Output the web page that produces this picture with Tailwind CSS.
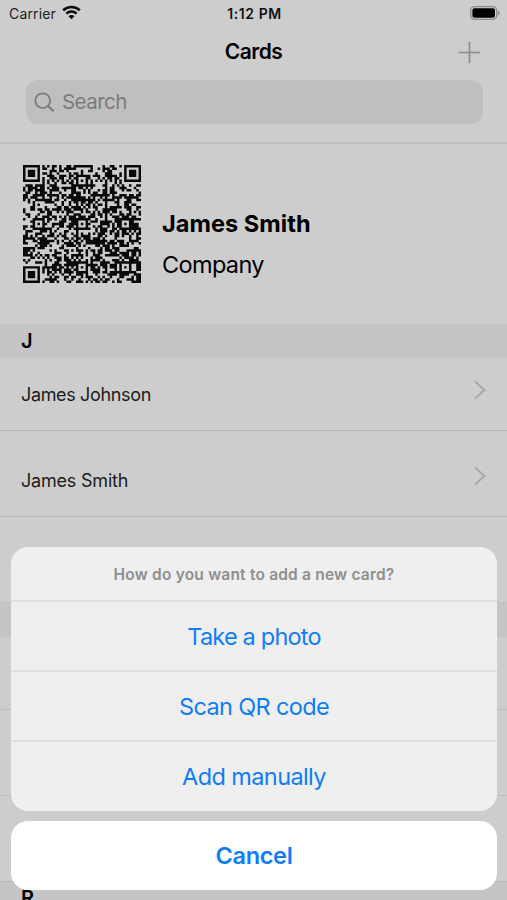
<!DOCTYPE html>
<html lang="en">
<head>
<meta charset="utf-8">
<title>Cards</title>
<script src="https://cdn.jsdelivr.net/npm/@tailwindcss/browser@4"></script>
</head>
<body class="bg-[#cdcdcd]">
<div class="relative w-[507px] h-[900px] overflow-hidden bg-[#cdcdcd] text-black font-['Inter',sans-serif]">
  <header class="h-[144px] border-b-2 border-[#c0c0c0] flex flex-col">
    <div class="h-[27px] grid grid-cols-3 items-center pl-[9px] pr-[7px] text-[14px]">
      <div class="flex items-center gap-[6px] text-[#222]">
        <span class="tracking-[0.15px]">Carrier</span>
        <svg class="w-[19px] h-[15px] -mt-[2px]" viewBox="0 0 19 15" fill="none" stroke="#0a0a0a" stroke-width="2.5"><path d="M1.2 5.4C5.8 .9 13.2 .9 17.8 5.4M4.3 8.7c2.9-2.8 7.5-2.8 10.4 0"/><path d="M9.5 14.2 6.5 11.2c1.7-1.6 4.3-1.6 6 0z" fill="#0a0a0a" stroke="none"/></svg>
      </div>
      <span class="text-center font-semibold tracking-[0.6px] text-[#111]">1:12 PM</span>
      <svg class="justify-self-end w-[30px] h-[14px] -mt-[1px]" viewBox="0 0 30 14"><rect x=".7" y=".7" width="26" height="12.6" rx="3.8" fill="none" stroke="#8b8b8b" stroke-width="1.3"/><rect x="2.4" y="2.3" width="22.6" height="9.4" rx="2" fill="#000"/><path d="M28 4.8c2.2.7 2.2 3.7 0 4.4z" fill="#8b8b8b"/></svg>
    </div>
    <div class="h-[50px] grid grid-cols-3 items-center">
      <h1 class="col-start-2 text-center font-semibold text-[21px] tracking-[-0.5px]">Cards</h1>
      <svg class="justify-self-end mr-[26px] w-[23px] h-[23px]" viewBox="0 0 23 23" stroke="#8d8d8d" stroke-width="1.7"><path d="M11.5 .7v21.6M.7 11.5h21.6"/></svg>
    </div>
    <div class="ml-[26px] mr-[24px] mt-[3px] h-[44px] rounded-[12px] bg-[#bfbfbf] flex items-center pl-[8px] gap-[7px] text-[#7b7b7e]">
      <svg class="w-[21px] h-[21px]" viewBox="0 0 21 21" fill="none" stroke="currentColor" stroke-width="1.8"><circle cx="8.7" cy="8.7" r="7.4"/><path d="m14 14 5.7 5.3" stroke-width="2.2"/></svg>
      <span class="text-[20.5px] tracking-[-0.55px]">Search</span>
    </div>
  </header>
  <main>
    <section class="h-[180px] flex pl-[23px] pt-[21px] gap-[21px]">
      <svg id="qr" class="w-[118px] h-[118px]" viewBox="0 0 49 49"></svg>
      <div class="pt-[44px]">
        <h2 class="text-[23.5px] leading-[30px] font-bold tracking-[0.05px]">James Smith</h2>
        <p class="text-[23.5px] leading-[30px] mt-[11px] tracking-[-0.65px]">Company</p>
      </div>
    </section>
    <h3 class="h-[34px] bg-[#c5c5c8] pl-[21px] flex items-center text-[20px] font-semibold">J</h3>
    <div class="h-[73px] border-b border-[#b9b9b9] flex items-center justify-between pl-[21px] pr-[21px] text-[18px] text-[#1c1c1c]">
      <span class="tracking-[-0.35px] pt-[1px]">James Johnson</span>
      <svg class="w-[12px] h-[20px] -mt-[8px]" viewBox="0 0 12 20" fill="none" stroke="#a6a6a8" stroke-width="1.8"><path d="m1 1.3 9.4 8.7L1 18.7"/></svg>
    </div>
    <div class="h-[86px] border-b border-[#b9b9b9] flex items-center justify-between pl-[21px] pr-[21px] pt-[13px] text-[18px] text-[#1c1c1c]">
      <span class="tracking-[-0.2px] pt-[1px]">James Smith</span>
      <svg class="w-[12px] h-[20px] -mt-[9px]" viewBox="0 0 12 20" fill="none" stroke="#a6a6a8" stroke-width="1.8"><path d="m1 1.3 9.4 8.7L1 18.7"/></svg>
    </div>
    <div class="h-[86px] border-b border-[#bdbdbd]"></div>
    <div class="h-[34px] bg-[#c5c5c8]"></div>
    <div class="h-[73px] border-b border-[#bdbdbd]"></div>
    <div class="h-[86px] border-b border-[#bdbdbd]"></div>
    <div class="h-[86px] border-b border-[#bdbdbd]"></div>
    <h3 class="h-[34px] bg-[#c5c5c8] pl-[21px] pb-[2px] flex items-center text-[20px] font-semibold">R</h3>
  </main>
  <div class="absolute left-[11px] top-[547px] w-[486px] flex flex-col gap-[10px] text-center text-[23.5px] text-[#0f7df5]">
    <div class="h-[264px] rounded-[17px] bg-[#efefef] overflow-hidden flex flex-col divide-y-2 divide-[#dfe0df]">
      <p class="h-[55px] pt-[2px] flex items-center justify-center text-[15.5px] font-semibold tracking-[0.2px] text-[#8e8e8e]">How do you want to add a new card?</p>
      <button class="h-[70px] pt-[2px] tracking-[-0.8px]">Take a photo</button>
      <button class="h-[70px] pt-[2px] tracking-[-0.65px]">Scan QR code</button>
      <button class="h-[69px] tracking-[-0.6px]">Add manually</button>
    </div>
    <button class="h-[69px] rounded-[17px] bg-white font-semibold tracking-[-0.3px]">Cancel</button>
  </div>
</div>
<script>
  // Version 8 symbol: 49 modules, finders in three corners, alignment marks at 6/24/42.
  const n = 49, g = [];
  let seed = 73129;
  const rnd = () => (seed = (seed * 1103515245 + 12345) % 2147483648) / 2147483648;
  for (let y = 0; y < n; y++) { g[y] = []; for (let x = 0; x < n; x++) g[y][x] = rnd() < 0.53; }
  for (let i = 0; i < n; i++) g[6][i] = g[i][6] = i % 2 === 0;
  const mark = (cx, cy, r, off) => {
    for (let y = -r; y <= r; y++) for (let x = -r; x <= r; x++) {
      const d = Math.max(Math.abs(x), Math.abs(y));
      if (g[cy + y] && cx + x >= 0 && cx + x < n) g[cy + y][cx + x] = !off.includes(d);
    }
  };
  [[3, 3], [45, 3], [3, 45]].forEach(([x, y]) => mark(x, y, 4, [2, 4]));
  [[24, 6], [6, 24], [24, 24], [42, 24], [24, 42], [42, 42]].forEach(([x, y]) => mark(x, y, 2, [1]));
  let d = '';
  for (let y = 0; y < n; y++) for (let x = 0; x < n; x++) if (g[y][x]) d += `M${x} ${y}h1.03v1.03h-1.03z`;
  document.getElementById('qr').innerHTML = `<path fill="#080808" d="${d}"/>`;
</script>
</body>
</html>
